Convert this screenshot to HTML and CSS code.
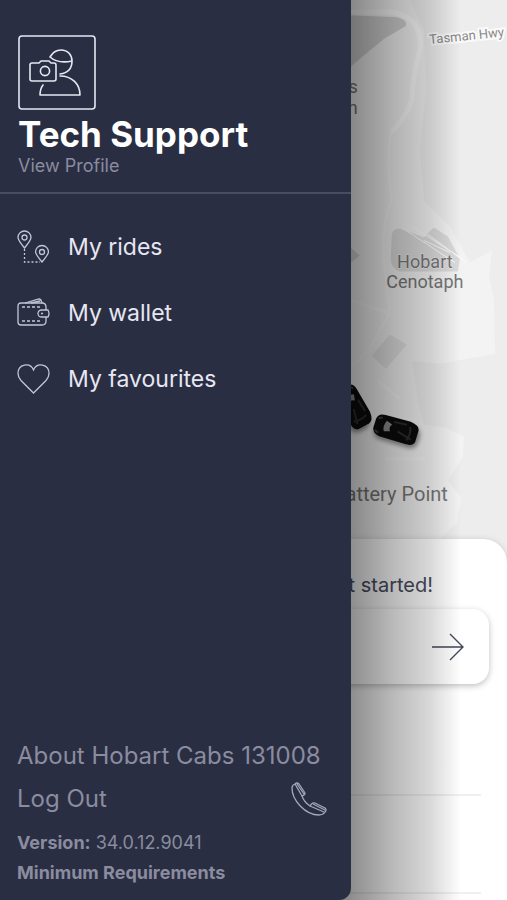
FILE: index.html
```html
<!DOCTYPE html>
<html lang="en">
<head>
  <meta charset="UTF-8" />
  <meta name="viewport" content="width=device-width, initial-scale=1.0"/>
  <title>Hobart Cabs</title>
  <link rel="stylesheet" href="styles.css">
</head>
<body>

<main class="app">
  <section class="map" aria-label="Map">
    <svg class="map-canvas" viewBox="0 0 507 562" preserveAspectRatio="xMaxYMin slice">
      <defs>
        <filter id="soft" x="-20%" y="-20%" width="140%" height="140%">
          <feGaussianBlur stdDeviation="2"/>
        </filter>
        <g id="car">
          <rect x="-21" y="-8" width="46" height="22" rx="8" fill="#000" opacity=".4" filter="url(#soft)"/>
          <path d="M-22-5Q-21-11-14-11L12-12Q21-11 22-6V6Q21 11 13 11L-14 11Q-21 10-22 5Z" fill="#0b0b0b"/>
          <path d="M-11-6Q-14 0-11 5L-5 3Q-8 0-5-4Z" fill="#8c8c8c"/>
          <path d="M-4-7L9-8M2 1L17 5M13-7Q16 0 13 7" fill="none" stroke="#2c2c2c" stroke-width="2"/>
          <path d="M-20-6L-16-8M-20 6L-16 8" stroke="#3c3c3c" stroke-width="2"/>
        </g>
      </defs>
      <rect width="507" height="562" fill="#ededed"/>

      <!-- land -->
      <path d="M340 0H410L424 30 426 90 420 150 424 200 450 226 470 262 492 250 489 275 494 300 495 353 440 363 412 360 418 400 424 424 446 427 464 436 463 456 448 480 461 496 457 522 438 540 440 562H340Z" fill="#f3f3f3"/>
      <path d="M340 15L395 17Q408 19 406 26L384 39 361 58 340 76Z" fill="#d2d2d2"/>
      <path d="M392 234Q393 228 400 228L424 237 434 227 448 236 460 258 458 271 400 271Q391 268 391 258Z" fill="#dcdcdc"/>
      <path d="M390 334L407 344 386 368 372 355Z" fill="#e4e4e4"/>
      <path d="M340 244L352 248 360 255 350 263H340Z" fill="#d8d8d8"/>

      <!-- roads -->
      <g fill="none" stroke="#fafafa">
        <path d="M345 12H392Q424 18 420 50 412 80 412 100 406 118 391 132" stroke-width="5"/>
        <path d="M391 132Q386 160 392 200 382 220 384 260L390 312 370 348 352 366" stroke-width="2" opacity=".6"/>
        <path d="M403 228L455 262M412 226L462 258M424 240L450 252M428 234L466 262" stroke-width="1"/>
        <path d="M352 300L388 312M378 380L400 398M386 458H425" stroke-width="3" opacity=".6"/>
      </g>

      <g class="map-label">
        <text x="358" y="93" text-anchor="end">Queens</text>
        <text x="358" y="114" text-anchor="end">Domain</text>
        <text x="425" y="268" text-anchor="middle">Hobart</text>
        <text x="425" y="287" text-anchor="middle">Cenotaph</text>
      </g>
      <text class="map-label map-label-suburb" x="448" y="500" text-anchor="end">Battery Point</text>
      <text class="map-label map-label-road" x="430" y="44" transform="rotate(-6 430 44)">Tasman Hwy</text>

      <use href="#car" transform="translate(354 406) rotate(62)"/>
      <use href="#car" transform="translate(396 429) rotate(17)"/>
    </svg>
  </section>

  <section class="sheet">
    <h2 class="sheet-title">Let's get started!</h2>
    <button class="go" type="button" aria-label="Choose destination">
      <svg width="34" height="28" viewBox="0 0 34 28" fill="none" stroke="currentColor" stroke-width="1.4">
        <path d="M1 14H32M19 1L32 14 19 27"/>
      </svg>
    </button>
    <ul class="places">
      <li></li>
      <li></li>
    </ul>
  </section>
</main>

<div class="overlay">
  <aside class="drawer">
    <header class="profile">
      <svg class="avatar" width="78" height="75" viewBox="0 0 78 75" fill="none" stroke="currentColor" stroke-width="1.6" stroke-linejoin="round" stroke-linecap="round">
        <rect x="1" y="1" width="76" height="73" rx="3"/>
        <path d="M12 30Q12 28 14 28H21L23 26H31L33 28H36Q38 28 38 30V44Q38 46 36 46H14Q12 46 12 44Z"/>
        <circle cx="27" cy="36" r="4.600"/>
        <path d="M32 22Q36 15 43 15C50 15 54 20 54 26C54 34 50 38 42 39M32 22Q40 29 54 26"/>
        <path d="M42 41C54 41 62 49 62 60H22Q22 54 25 50"/>
      </svg>
      <h1 class="name">Tech Support</h1>
      <a class="view-profile" href="#">View Profile</a>
    </header>

    <nav class="menu">
      <a href="#">
        <svg width="32" height="34" viewBox="0 0 32 34" fill="none" stroke="currentColor" stroke-width="1.3">
          <path d="M7.500 18Q1 10 1 7.500A6.500 6.500 0 0 1 14 7.500Q14 10 7.500 18Z"/>
          <circle cx="7.500" cy="7.500" r="2.500"/>
          <path d="M25 32Q18.500 24 18.500 22A6.500 6.500 0 0 1 31.500 22Q31.500 24 25 32Z"/>
          <circle cx="25" cy="22" r="2.500"/>
          <path d="M7.500 19V32H23" stroke-dasharray="2 2"/>
        </svg>
        My rides
      </a>
      <a href="#">
        <svg width="33" height="34" viewBox="0 0 33 34" fill="none" stroke="currentColor" stroke-width="1.3">
          <path d="M8 7L22 3Q24 3 25 7M14 7L23 5"/>
          <path d="M29 14V11Q29 7 25 7H4Q1 7 1 10V26Q1 29 4 29H25Q29 29 29 25V21"/>
          <path d="M31 14H24.500A3.500 3.500 0 0 0 24.500 21H31Q33 17.500 31 14Z"/>
          <path d="M5 11H25M5 25H25" stroke-dasharray="3 2"/>
          <path d="M24 17.500H26"/>
        </svg>
        My wallet
      </a>
      <a href="#">
        <svg width="33" height="34" viewBox="0 0 33 34" fill="none" stroke="currentColor" stroke-width="1.3">
          <path d="M16.500 31L4 18.500Q1 15 1 11.500C1 2 13 0 16.500 8C20 0 32 2 32 11.500Q32 15 29 18.500Z"/>
        </svg>
        My favourites
      </a>
    </nav>

    <footer class="drawer-footer">
      <a class="footer-link" href="#">About Hobart Cabs 131008</a>
      <div class="footer-row">
        <a class="footer-link" href="#">Log Out</a>
        <a class="call" href="tel:131008" aria-label="Call Hobart Cabs">
          <svg width="36" height="34" viewBox="0 0 36 34" fill="none" stroke="currentColor" stroke-width="1.3" stroke-linejoin="round">
            <path d="M1 6Q1 3 4 2Q6 0 8 2L14 11Q14 13 11 14Q13 20 19 24Q21 20 24 21L34 26Q36 28 34 30Q32 33 28 33C14 33 1 18 1 6Z"/>
            <path d="M4 2L11 14M6 2L13 12M19 24L33 30M22 22L34 28"/>
          </svg>
        </a>
      </div>
      <p class="footer-note"><b>Version:</b> 34.0.12.9041</p>
      <a class="footer-note" href="#"><b>Minimum Requirements</b></a>
    </footer>
  </aside>
  <div class="shade"></div>
</div>

</body>
</html>
```
FILE: styles.css
```css
* {
  box-sizing: border-box;
}

body {
  margin: 0;
  font-family: Inter, 'Liberation Sans', sans-serif;
  position: relative;
}

a {
  color: inherit;
  text-decoration: none;
}

svg {
  display: block;
}

.app {
  min-height: 100vh;
  display: flex;
  flex-direction: column;
}

/* Map */
.map {
  flex: 1;
  position: relative;
  background: #ededed;
}

.map-canvas {
  position: absolute;
  width: 100%;
  height: 100%;
}

.map-label {
  font-family: Roboto, sans-serif;
  font-size: 18px;
  fill: #777;
  stroke: #f3f3f3;
  stroke-width: 1px;
  paint-order: stroke;
}

.map-label-suburb {
  font-size: 20px;
}

.map-label-road {
  font-size: 13px;
  fill: #8a8a8a;
  stroke: #fafafa;
  stroke-width: 4px;
}

/* Bottom sheet */
.sheet {
  position: relative;
  margin-top: -24px;
  padding: 32px 18px 6px;
  background: #fff;
  border-radius: 24px 24px 0 0;
  box-shadow: 0 0 6px rgba(0,0,0,0.12);
}

.sheet-title {
  margin: 0 56px 10px 0;
  font-size: 20px;
  line-height: 28px;
  font-weight: 400;
  text-align: right;
  color: #4a4c5e;
}

.go {
  width: 100%;
  height: 75px;
  padding: 0 24px;
  display: flex;
  align-items: center;
  justify-content: flex-end;
  border: 0;
  border-radius: 16px;
  background: #fff;
  color: #44465a;
  box-shadow: 0 2px 6px rgba(0,0,0,0.25);
}

.places {
  margin: 14px 8px 0 0;
  padding: 0;
  list-style: none;
}

.places li {
  height: 98px;
  border-bottom: 2px solid #f0f0f0;
}

/* Drawer */
.overlay {
  position: absolute;
  inset: 0;
  display: flex;
}

.drawer {
  flex: 0 0 69.2%;
  position: relative;
  z-index: 1;
  display: flex;
  flex-direction: column;
  background: #2a2e43;
  color: #e6e7f2;
  border-radius: 0 0 12px 0;
}

.shade {
  flex: 0 0 24%;
  margin-left: -12px;
  background: linear-gradient(to right, rgba(0,0,0,0.5), rgba(0,0,0,0.43) 12%, rgba(0,0,0,0.27) 45%, rgba(0,0,0,0.15) 75%, rgba(0,0,0,0));
}

.profile {
  padding: 35px 18px 14px;
  border-bottom: 2px solid #4c4c61;
}

.name {
  margin: 4px 0 0;
  font-size: 35px;
  line-height: 40px;
  font-weight: 700;
  color: #fff;
}

.view-profile {
  display: block;
  font-size: 18px;
  line-height: 24px;
  color: #8b8c9f;
}

.menu {
  padding: 20px 17px;
}

.menu a {
  height: 66px;
  display: grid;
  grid-template-columns: 32px 1fr;
  align-items: center;
  gap: 19px;
  font-size: 23px;
}

.menu svg {
  color: #c4c6d6;
}

.drawer-footer {
  margin-top: auto;
  padding: 0 24px 12px 17px;
  color: #8b8c9f;
}

.footer-link {
  font-size: 24px;
  line-height: 32px;
}

.footer-row {
  display: flex;
  justify-content: space-between;
  align-items: center;
  margin: 10px 0 12px;
}

.call {
  color: #a5a6b8;
}

.footer-note {
  display: block;
  margin: 0;
  font-size: 18px;
  line-height: 30px;
}
```
